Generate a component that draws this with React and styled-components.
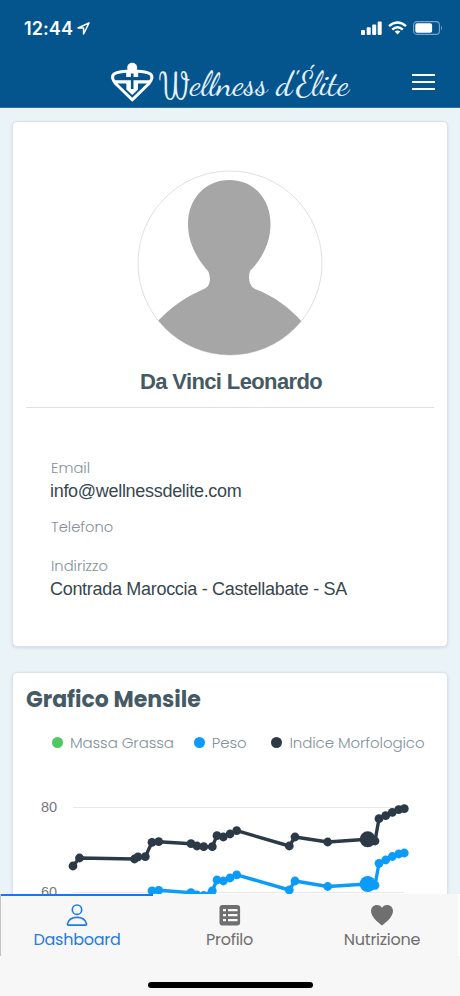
import React, { useState } from 'react';
import styled, { createGlobalStyle } from 'styled-components';

const GlobalStyle = createGlobalStyle`
  * {
    box-sizing: border-box;
  }

  body {
    margin: 0;
    background: #eaf3f7;
    font-family: 'Poppins', 'Inter', sans-serif;
  }
`;

const Screen = styled.div`
  display: flex;
  flex-direction: column;
  width: 460px;
  height: 996px;
  overflow: hidden;
  background: #eaf3f7;
`;

const Header = styled.header`
  flex: none;
  height: 108px;
  background: #04558e;
  border-bottom: 1px solid #2b6f9f;
  color: #fff;
`;

const StatusBar = styled.div`
  display: flex;
  align-items: center;
  height: 56px;
  padding: 0 17px 0 24px;
`;

const Clock = styled.span`
  font-family: 'Inter', sans-serif;
  font-size: 18px;
  font-weight: 600;
  letter-spacing: 0.1px;
  margin-right: 4px;
`;

const StatusIcons = styled.div`
  display: flex;
  align-items: center;
  gap: 6px;
  margin-left: auto;
`;

const TitleBar = styled.div`
  display: flex;
  align-items: center;
  height: 51px;
  padding: 0 25px 0 108px;
`;

const MenuButton = styled.button`
  display: flex;
  flex-direction: column;
  gap: 5px;
  width: 23px;
  margin-left: auto;
  padding: 0;
  border: none;
  background: none;
  cursor: pointer;
`;

const MenuLine = styled.span`
  height: 2px;
  background: #fff;
`;

const Content = styled.main`
  flex: 1;
  display: flex;
  flex-direction: column;
  gap: 25px;
  min-height: 0;
  padding: 13px 12px 0;
  overflow: hidden;
`;

const Card = styled.section`
  flex: none;
  height: ${(props) => props.$height}px;
  background: #fff;
  border: 1px solid #d9e2e5;
  border-radius: 5px;
  box-shadow: 0 1px 3px rgba(60, 90, 100, 0.15);
`;

const ProfileTop = styled.div`
  display: flex;
  flex-direction: column;
  align-items: center;
  height: 286px;
  margin: 0 13px;
  padding-top: 48px;
  border-bottom: 1px solid #dfdfdf;
`;

const Name = styled.h2`
  margin: 11px 0 0 2px;
  font-family: 'Liberation Sans', sans-serif;
  font-size: 22px;
  line-height: 30px;
  font-weight: 700;
  letter-spacing: -0.62px;
  color: #455a64;
`;

const Fields = styled.dl`
  margin: 0;
  padding: 50px 37px 0 38px;
`;

const Label = styled.dt`
  font-size: 14.7px;
  line-height: 20px;
  font-weight: 300;
  color: #84919a;
`;

const Value = styled.dd`
  min-height: 19px;
  margin: 0 0 0 -1px;
  font-family: 'Liberation Sans', sans-serif;
  font-size: 18px;
  line-height: 27px;
  letter-spacing: -0.3px;
  color: #37474f;

  &:not(:empty) {
    margin-bottom: 12px;
  }
`;

const ChartTitle = styled.h2`
  margin: 0;
  padding: 11px 13px 0;
  font-size: 22px;
  line-height: 31px;
  font-weight: 700;
  color: #455a64;
`;

const Legend = styled.div`
  display: flex;
  align-items: center;
  height: 20px;
  margin: 17px 0 9px 39px;
`;

const LegendItem = styled.span`
  display: flex;
  align-items: center;
  margin-right: ${(props) => props.$gap || 0}px;
  font-size: 15px;
  font-weight: 300;
  letter-spacing: -0.1px;
  white-space: nowrap;
  color: #84919a;

  &::before {
    content: '';
    width: 11px;
    height: 11px;
    margin-right: 7px;
    border-radius: 50%;
    background: ${(props) => props.$color};
  }
`;

const BottomNav = styled.nav`
  flex: none;
  height: 102px;
  background: #f7f7f7;
`;

const Tabs = styled.div`
  display: grid;
  grid-template-columns: 152px 153px 152px;
  height: 62px;
  border-left: 1px solid #c4c4c4;
  border-right: 2px solid #fff;
`;

const Tab = styled.button`
  display: flex;
  flex-direction: column;
  align-items: center;
  padding: 8px 0 0;
  border: none;
  border-top: 2px solid ${(props) => (props.$active ? '#1479f0' : 'transparent')};
  background: none;
  color: ${(props) => (props.$active ? '#1f7be8' : '#6f6f6f')};
  font-family: inherit;
  font-size: 16px;
  line-height: 24px;
  letter-spacing: -0.25px;
  cursor: pointer;

  svg {
    display: block;
    margin-bottom: 2px;
  }
`;

const HomeIndicator = styled.div`
  width: 165px;
  height: 6px;
  margin: 26px auto 0;
  border-radius: 3px;
  background: #000;
`;

const CHART_X = [
  73, 79.5, 134.5, 138, 145.3, 152, 158.7, 191, 197, 203.7, 212.3, 217, 223.3,
  230, 236.7, 289.3, 295, 327.7, 367.7, 375, 379, 385.7, 392.3, 398.7, 404.3,
];
const INDEX_Y = [
  866, 858, 859, 856.8, 856.7, 842.3, 841.7, 843.7, 846, 846.7, 846.7, 835.7, 837,
  834, 830.7, 846, 837, 842, 839.3, 841, 818.7, 815.7, 812.3, 809.7, 808.7,
];
const WEIGHT_Y = [
  915, 907, 907, 905, 905, 890.8, 890.3, 892.7, 895, 895.5, 890.8, 880, 881,
  878, 874.8, 890, 881, 886.5, 884, 885.3, 863.3, 860, 856.5, 854, 853,
];
const SELECTED = 18;

function Series({ ys, color }) {
  return (
    <g fill={color}>
      <polyline
        points={CHART_X.map((x, i) => `${x},${ys[i]}`).join(' ')}
        fill="none"
        stroke={color}
        strokeWidth="3.4"
        strokeLinejoin="round"
      />
      {CHART_X.map((x, i) => (
        <circle key={i} cx={x} cy={ys[i]} r={i === SELECTED ? 8 : 4.4} />
      ))}
    </g>
  );
}

function Chart() {
  return (
    <svg width="432" height="180" viewBox="13 761 432 180" style={{ display: 'block' }}>
      <path d="M73 807.5H404M73 892.5H404" stroke="#e8e8e8" />
      <g fill="#78797b" fontFamily="Liberation Sans, sans-serif" fontSize="14.5">
        <text x="41" y="812.4">80</text>
        <text x="41" y="896.8">60</text>
      </g>
      <Series ys={WEIGHT_Y} color="#0a9cf8" />
      <Series ys={INDEX_Y} color="#2c3a48" />
    </svg>
  );
}

function Logo() {
  return (
    <svg width="246" height="50" viewBox="108 56 246 50">
      <path
        d="M132.2 98.8L115.5 82.5Q110.5 76 114 73Q119 70 132.2 70Q145.4 70 150.4 73Q154 76 149 82.5Z"
        fill="none"
        stroke="#fff"
        strokeWidth="3"
        strokeLinejoin="round"
      />
      <path d="M114 79.2H150.4L148.5 82.4H138V88.5L132.2 94 126.4 88.5V82.4H116Z" fill="#fff" />
      <path d="M126.2 69H138.2V76H126.2Z" fill="#fff" />
      <path d="M132.2 72.5V88M124 77.6H140.4" stroke="#04558e" strokeWidth="2.6" />
      <circle cx="132.2" cy="66.8" r="5" fill="#fff" />
      <g fill="#e6f1fa">
        <text
          x="161"
          y="97"
          textLength="28"
          lengthAdjust="spacingAndGlyphs"
          fontFamily="Sofia, 'Dancing Script', cursive"
          fontSize="37"
        >
          W
        </text>
        <text
          x="190"
          y="94"
          textLength="159"
          lengthAdjust="spacingAndGlyphs"
          fontFamily="'Dancing Script', cursive"
          fontSize="33"
        >
          ellness d'Élite
        </text>
      </g>
    </svg>
  );
}

function Avatar() {
  return (
    <svg width="186" height="186" viewBox="0 0 186 186">
      <clipPath id="avatar">
        <circle cx="93" cy="93" r="92" />
      </clipPath>
      <circle cx="93" cy="93" r="92" fill="#fff" stroke="#e0e0e0" />
      <path
        clipPath="url(#avatar)"
        fill="#a6a6a6"
        d="M92.5 10C116 10 133.5 28 133.5 54C133.5 75 123 91 113 101C111 107 112 116 118 119C137 126 153 138 165 152V186H20V152C33 138 48 127 67 119C74 116 74 107 71 101C62 91 51 75 51 54C51 28 69 10 92.5 10Z"
      />
    </svg>
  );
}

const LocationArrow = () => (
  <svg width="13" height="13" viewBox="0 0 13 13" fill="none" stroke="#fff" strokeWidth="1.5" strokeLinejoin="round">
    <path d="M12 1L1 6H6.6V12Z" />
  </svg>
);

const Signal = () => (
  <svg width="21" height="14" viewBox="0 0 21 14" fill="#fff">
    <rect x="0" y="9" width="4" height="5" rx="1" />
    <rect x="5.7" y="6.3" width="4" height="7.7" rx="1" />
    <rect x="11.2" y="3.4" width="4" height="10.6" rx="1" />
    <rect x="16.7" y="0.5" width="4" height="13.5" rx="1" />
  </svg>
);

const Wifi = () => (
  <svg width="19" height="14" viewBox="0 0 19 14" fill="none" stroke="#fff" strokeWidth="2.4">
    <path d="M1 5.2Q9.5 -2.4 18 5.2M4.2 8.6Q9.5 3.7 14.8 8.6" />
    <path d="M9.5 13.5L6.7 10.6Q9.5 8.2 12.3 10.6Z" fill="#fff" stroke="none" />
  </svg>
);

const Battery = () => (
  <svg width="30" height="14" viewBox="0 0 30 14">
    <rect x="0.6" y="0.6" width="25.8" height="12.8" rx="3.4" fill="none" stroke="#7ba5c4" strokeWidth="1.1" />
    <rect x="2.3" y="2.3" width="16.8" height="9.4" rx="1.8" fill="#fff" />
    <path d="M28 4.6Q30 7 28 9.4Z" fill="#7ba5c4" />
  </svg>
);

const PersonIcon = () => (
  <svg width="22" height="22" viewBox="0 0 22 22" fill="none" stroke="currentColor" strokeWidth="1.6">
    <circle cx="11" cy="5.7" r="4.7" />
    <path d="M2.3 21.1Q1.3 21.1 1.5 19.8C2.5 15.8 6 13.4 11 13.4S19.5 15.8 20.5 19.8Q20.7 21.1 19.7 21.1Z" />
  </svg>
);

const ListIcon = () => (
  <svg width="22" height="22" viewBox="0 0 22 22">
    <rect x="0.5" y="1" width="20.6" height="20.4" rx="3" fill="currentColor" />
    <path d="M4 6.2H7M9 6.2H18.5M4 11.2H7M9 11.2H18.5M4 16.2H7M9 16.2H18.5" stroke="#f7f7f7" strokeWidth="2.2" />
  </svg>
);

const HeartIcon = () => (
  <svg width="24" height="22" viewBox="0 0 24 22" fill="currentColor">
    <path d="M12 21.5C9 19 1 13.2 1 7C1 3.3 3.8 1 6.8 1C9.3 1 11.2 2.3 12 4C12.8 2.3 14.7 1 17.2 1C20.2 1 23 3.3 23 7C23 13.2 15 19 12 21.5Z" />
  </svg>
);

const tabs = [
  { name: 'Dashboard', icon: PersonIcon },
  { name: 'Profilo', icon: ListIcon },
  { name: 'Nutrizione', icon: HeartIcon },
];

function App() {
  const [active, setActive] = useState('Dashboard');

  return (
    <Screen>
      <GlobalStyle />
      <Header>
        <StatusBar>
          <Clock>12:44</Clock>
          <LocationArrow />
          <StatusIcons>
            <Signal />
            <Wifi />
            <Battery />
          </StatusIcons>
        </StatusBar>
        <TitleBar>
          <Logo />
          <MenuButton aria-label="Menu">
            <MenuLine />
            <MenuLine />
            <MenuLine />
          </MenuButton>
        </TitleBar>
      </Header>

      <Content>
        <Card $height={526}>
          <ProfileTop>
            <Avatar />
            <Name>Da Vinci Leonardo</Name>
          </ProfileTop>
          <Fields>
            <Label>Email</Label>
            <Value>info@wellnessdelite.com</Value>
            <Label>Telefono</Label>
            <Value />
            <Label>Indirizzo</Label>
            <Value>Contrada Maroccia - Castellabate - SA</Value>
          </Fields>
        </Card>

        <Card $height={300}>
          <ChartTitle>Grafico Mensile</ChartTitle>
          <Legend>
            <LegendItem $color="#4fc95f" $gap={20}>Massa Grassa</LegendItem>
            <LegendItem $color="#0a9cf8" $gap={25}>Peso</LegendItem>
            <LegendItem $color="#2c3a48">Indice Morfologico</LegendItem>
          </Legend>
          <Chart />
        </Card>
      </Content>

      <BottomNav>
        <Tabs>
          {tabs.map(({ name, icon: TabIcon }) => (
            <Tab key={name} $active={active === name} onClick={() => setActive(name)}>
              <TabIcon />
              {name}
            </Tab>
          ))}
        </Tabs>
        <HomeIndicator />
      </BottomNav>
    </Screen>
  );
}

export default App;
